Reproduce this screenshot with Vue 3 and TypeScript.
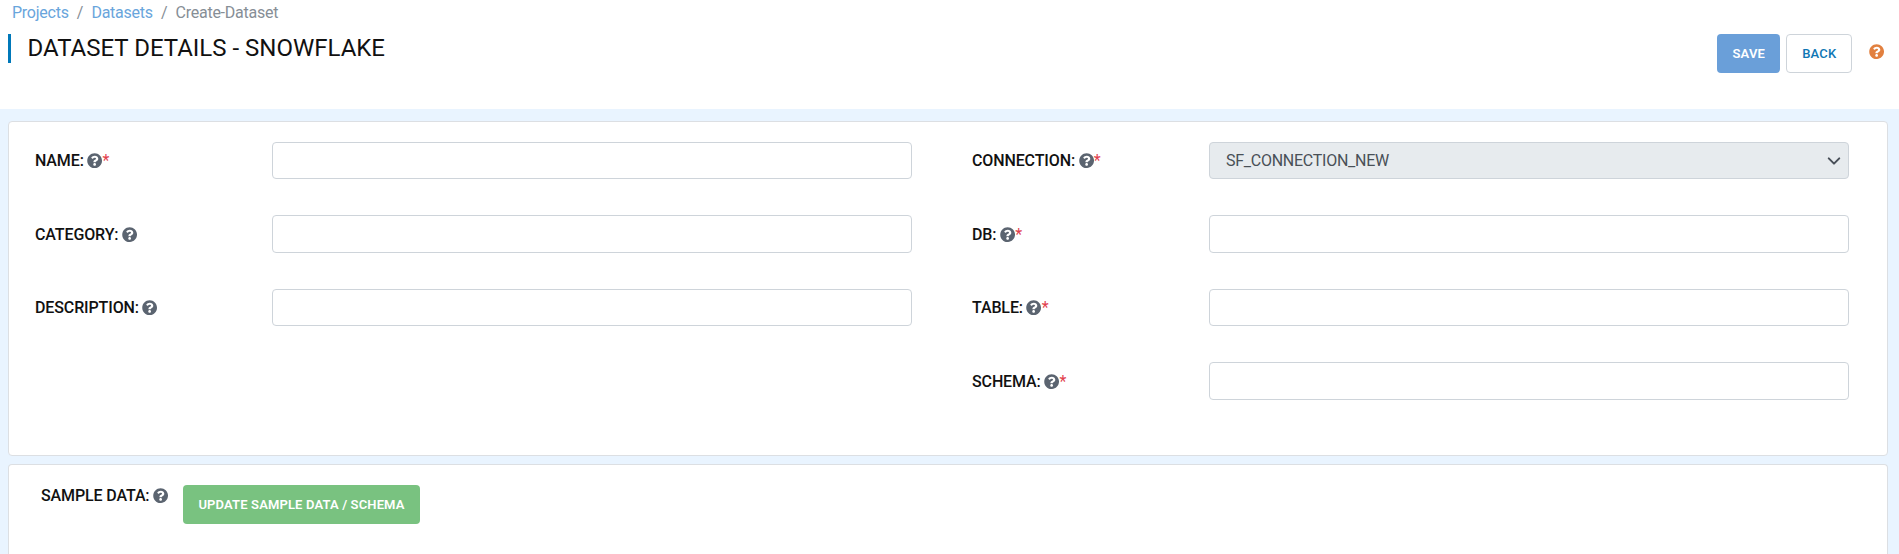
<script setup lang="ts">
import { h, type FunctionalComponent } from 'vue'

interface Field {
  id: string
  label: string
  required: boolean
  value?: string
}

const left: Field[] = [
  { id: 'name', label: 'NAME:', required: true },
  { id: 'category', label: 'CATEGORY:', required: false },
  { id: 'description', label: 'DESCRIPTION:', required: false },
]
const right: Field[] = [
  { id: 'connection', label: 'CONNECTION:', required: true, value: 'SF_CONNECTION_NEW' },
  { id: 'db', label: 'DB:', required: true },
  { id: 'table', label: 'TABLE:', required: true },
  { id: 'schema', label: 'SCHEMA:', required: true },
]
const columns: Field[][] = [left, right]

const helpPath =
  'M504 256c0 136.997-111.043 248-248 248S8 392.997 8 256C8 119.083 119.043 8 256 8s248 111.083 248 248zM262.655 90c-54.497 0-89.255 22.957-116.549 63.758-3.536 5.286-2.353 12.415 2.715 16.258l34.699 26.31c5.205 3.947 12.621 3.008 16.665-2.122 17.864-22.658 30.113-35.797 57.303-35.797 20.429 0 45.698 13.148 45.698 32.958 0 14.976-12.363 22.667-32.534 33.976C247.128 238.528 216 254.941 216 296v4c0 6.627 5.373 12 12 12h56c6.627 0 12-5.373 12-12v-1.333c0-28.462 83.186-29.647 83.186-106.667 0-58.002-60.165-102-116.531-102zM256 338c-25.365 0-46 20.635-46 46 0 25.364 20.635 46 46 46s46-20.636 46-46c0-25.364-20.635-46-46-46z'

const HelpIcon: FunctionalComponent = () =>
  h('svg', { viewBox: '0 0 512 512', 'aria-hidden': 'true' }, [
    h('path', { d: helpPath, fill: 'currentColor' }),
  ])
</script>

<template>
  <div class="page">
    <header class="header">
      <nav class="crumbs">
        <a class="crumb-link">Projects</a>
        <span class="sep">/</span>
        <a class="crumb-link">Datasets</a>
        <span class="sep">/</span>
        <span>Create-Dataset</span>
      </nav>
      <div class="title-row">
        <h1 class="title">DATASET DETAILS - SNOWFLAKE</h1>
        <div class="actions">
          <button class="btn save">SAVE</button>
          <button class="btn back">BACK</button>
          <HelpIcon class="help help-orange" />
        </div>
      </div>
    </header>

    <main class="content">
      <section class="card form">
        <div v-for="(col, i) in columns" :key="i" class="column">
          <div v-for="f in col" :key="f.id" class="row">
            <label class="label" :for="f.id">
              <span>{{ f.label }}</span>
              <HelpIcon class="help" />
              <span v-if="f.required" class="star">*</span>
            </label>
            <div v-if="f.value" :id="f.id" class="control select">
              <span>{{ f.value }}</span>
              <svg class="chevron" viewBox="0 0 16 16">
                <path d="M2 5l6 6 6-6" fill="none" stroke="#484f58" stroke-width="2.3" stroke-linecap="round" stroke-linejoin="round" />
              </svg>
            </div>
            <input v-else :id="f.id" class="control" type="text" />
          </div>
        </div>
      </section>

      <section class="card sample">
        <div class="label sample-label">
          <span>SAMPLE DATA:</span>
          <HelpIcon class="help" />
        </div>
        <button class="btn update">UPDATE SAMPLE DATA / SCHEMA</button>
      </section>
    </main>
  </div>
</template>

<style>
html,
body {
  margin: 0;
  overflow: hidden;
}
</style>

<style scoped>
* {
  box-sizing: border-box;
}
.page {
  height: 554px;
  overflow: hidden;
  display: flex;
  flex-direction: column;
  background: #e9f4ff;
  font-family: Roboto, "Liberation Sans", sans-serif;
  font-size: 16px;
  color: #111;
}
.header {
  height: 109px;
  flex: none;
  background: #fff;
}
.crumbs {
  display: flex;
  height: 34px;
  padding-left: 12px;
  line-height: 25px;
  letter-spacing: -0.25px;
  color: #868e96;
}
.crumb-link {
  color: #69a5dc;
}
.sep {
  padding: 0 8.2px;
}
.title-row {
  display: flex;
  justify-content: space-between;
  align-items: flex-start;
  padding: 0 15px 0 8px;
}
.title {
  margin: 0;
  height: 29px;
  padding-left: 16.5px;
  border-left: 3px solid #0078b9;
  font-size: 24px;
  font-weight: 400;
  line-height: 29px;
}
.actions {
  display: flex;
}
.btn {
  height: 39px;
  padding: 0;
  border: 1px solid transparent;
  border-radius: 4px;
  font-family: inherit;
  font-size: 13px;
  font-weight: 600;
  letter-spacing: 0.14px;
  color: #fff;
}
.save {
  width: 63px;
  margin-right: 6px;
  padding-left: 1px;
  background: #6a9fd9;
}
.back {
  width: 66px;
  margin-right: 17px;
  padding-left: 1px;
  background: #fff;
  border-color: #ced4da;
  color: #0e76b4;
  font-weight: 500;
}
.help {
  width: 15.25px;
  height: 15.25px;
  flex: none;
  margin: 0 0 1.5px 3.5px;
  color: #5b6470;
}
.help-orange {
  margin: 10px 0 0;
  color: #e2803f;
}
.content {
  flex: 1;
  display: flex;
  flex-direction: column;
  gap: 8px;
  padding: 12px 11px 0 8px;
}
.card {
  background: #fff;
  border: 1px solid #dcdfe3;
  border-radius: 4px;
}
.form {
  height: 335px;
  flex: none;
  display: flex;
  gap: 60px;
  padding: 19.8px 0 0 26px;
}
.column {
  width: 877px;
  display: flex;
  flex-direction: column;
  gap: 36px;
}
.row {
  display: flex;
  align-items: center;
  height: 37.5px;
}
.label {
  display: flex;
  align-items: center;
  width: 237px;
  padding-top: 1.7px;
  font-weight: 500;
  letter-spacing: -0.12px;
  line-height: 20px;
}
.star {
  color: #e2404c;
  font-weight: 400;
}
.control {
  width: 640px;
  height: 37.5px;
  border: 1px solid #ced4da;
  border-radius: 4px;
  background: #fff;
  outline: none;
  padding: 0 16px;
}
.select {
  display: flex;
  align-items: center;
  justify-content: space-between;
  padding: 0 7px 0 16px;
  background: #e7ebee;
  color: #495057;
  letter-spacing: -0.26px;
}
.chevron {
  width: 14px;
  height: 14px;
}
.sample {
  flex: 1;
  display: flex;
  align-items: flex-start;
  border-bottom: 0;
  border-radius: 4px 4px 0 0;
  padding: 20px 0 0 32px;
}
.sample-label {
  width: 142px;
  padding-top: 1px;
}
.update {
  width: 237px;
  background: #79c280;
}
</style>
